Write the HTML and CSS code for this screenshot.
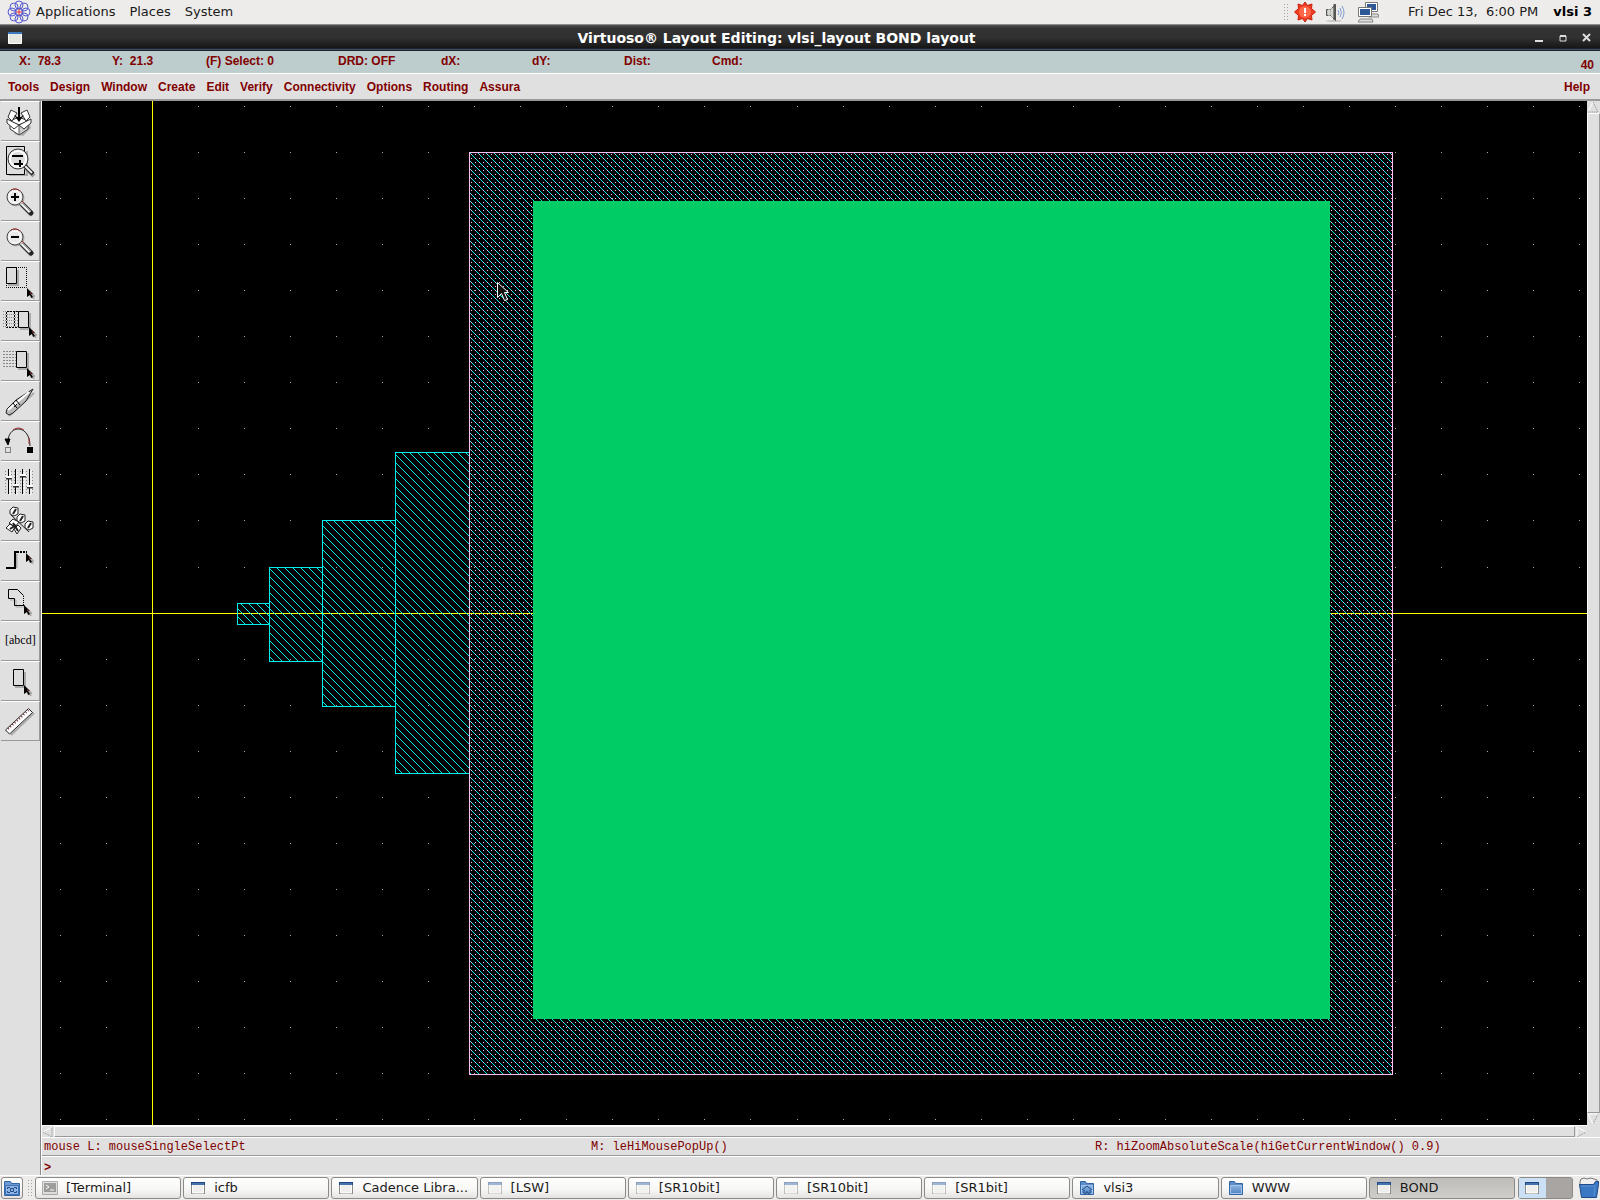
FILE: index.html
```html
<!DOCTYPE html>
<html lang="en">
<head>
<meta charset="utf-8">
<title>Virtuoso® Layout Editing: vlsi_layout BOND layout</title>
<link rel="stylesheet" href="styles.css">
</head>
<body>
<svg class="defs" aria-hidden="true">
  <defs>
    <linearGradient id="task-blue" x1="0" y1="0" x2="0" y2="1"><stop offset="0" stop-color="#8db4e2"/><stop offset="1" stop-color="#5185c4"/></linearGradient>
    <symbol id="arrow" viewBox="0 0 8 11"><path d="M2 3l5 5-2 0 2 3" fill="none" stroke="#aaa" stroke-width="2"/><path d="M0 0l6 6H4l2 3-2 1-1-3-3 2z" fill="#000"/><path d="M3 5h1v1" stroke="#a33" fill="none"/></symbol>
    <symbol id="lens" viewBox="0 0 38 38"><path d="M21 23l10 10" stroke="#aaa" stroke-width="5"/><path d="M20 21l10 10" stroke="#222" stroke-width="5" stroke-linecap="round"/><path d="M19 20l10 10" stroke="#f4f4f4" stroke-width="3"/><path d="M21 21l9 9" stroke="#999"/><circle cx="15" cy="16" r="8" fill="none" stroke="#aaa"/><circle cx="14" cy="15" r="8" fill="#e8e8e8" stroke="#444"/><circle cx="14" cy="15" r="6" fill="none" stroke="#fff"/><path d="M10 8a8 8 0 0 1 9 1M21 19l2 2" fill="none" stroke="#a33"/></symbol>
    <symbol id="window" viewBox="0 0 16 16"><rect x="1.500" y="2.500" width="13" height="11" fill="#eeeeec" stroke="#8a8c88"/><path d="M1 2h14v3H1z" fill="#204a87"/><path d="M2 4h12" stroke="#6d9bd1"/><path d="M2.500 5v8h11V5" fill="none" stroke="#fff"/></symbol>
    <symbol id="folder" viewBox="0 0 16 16"><path d="M1.500 1.500h5l1 2h7v11h-13z" fill="#5c8dc9" stroke="#3465a4"/><path d="M2.500 5.500h11v8h-11z" fill="url(#task-blue)" stroke="#a4c3e8"/></symbol>
  </defs>
</svg>
<div class="desktop">
  <header class="panel">
    <nav class="panel-menu">
      <svg class="logo" viewBox="0 0 24 24" aria-hidden="true"><g fill="none" stroke="#5459cf"><circle cx="12" cy="5" r="4"/><circle cx="17" cy="7" r="4"/><circle cx="19" cy="12" r="4"/><circle cx="17" cy="17" r="4"/><circle cx="12" cy="19" r="4"/><circle cx="7" cy="17" r="4"/><circle cx="5" cy="12" r="4"/><circle cx="7" cy="7" r="4"/><circle cx="12" cy="12" r="4"/></g><path d="M9 12h6M12 9v6" stroke="#d33"/></svg>
      <button>Applications</button><button>Places</button><button>System</button>
    </nav>
    <div class="tray">
      <span class="grip"></span>
      <svg class="tray-icon" viewBox="0 0 22 22" aria-hidden="true"><path d="M11 1l2.500 3.500 4.500-1.500-.5 4.500 4 3.500-4 3.500.5 4.500-4.500-1.500L11 21l-2.500-3.500L4 19l.5-4.500-4-3.500 4-3.500L4 3l4.500 1.500z" fill="#ee3b20" stroke="#c8210c"/><circle cx="11" cy="11" r="6" fill="#ff6848"/><path d="M11 7v5M11 13v2" stroke="#fff" stroke-width="2"/></svg>
      <svg class="tray-icon speaker" viewBox="0 0 22 22" aria-hidden="true"><ellipse cx="10" cy="20" rx="8" ry="1" fill="#c8c8c4"/><path d="M2.500 8.500h4l5-5v16l-5-5h-4z" fill="#babdb6" stroke="#555753"/><path d="M5 8v7M8 7v10" stroke="#eee"/><path d="M10.500 3v16" stroke="#555753" stroke-width="2"/><path d="M14 9q2 3 0 5M16 7q3 5 0 9M18 5q4 7 0 13" fill="none" stroke="#7c9ccb"/></svg>
      <svg class="tray-icon network" viewBox="0 0 22 22" aria-hidden="true"><path d="M8.500 1.500h12v9h-12z" fill="#fff" stroke="#777"/><path d="M10 3h9v6h-9z" fill="#2d5796"/><path d="M11 13h10l1 3H12z" fill="#ddd" stroke="#888"/><path d="M1.500 6.500h13v9h-13z" fill="#fff" stroke="#777"/><path d="M3 8h10v6H3z" fill="#2d5796"/><path d="M3 18h12l1 3H1z" fill="#ddd" stroke="#888"/></svg>
      <button class="clock">Fri Dec 13,&nbsp; 6:00 PM</button>
      <button class="user">vlsi 3</button>
    </div>
  </header>

  <div class="titlebar">
    <svg class="title-icon" viewBox="0 0 16 16" aria-hidden="true"><path d="M1.500 2.500h13v11h-13z" fill="#e4e6e0" stroke="#fff"/><path d="M1 2h14v2H1z" fill="#3b78bd"/></svg>
    <h1>Virtuoso® Layout Editing: vlsi_layout BOND layout</h1>
    <div class="controls">
      <button aria-label="Minimize"><svg viewBox="0 0 10 10"><path d="M1 8h8" stroke="#ddd" stroke-width="2"/></svg></button>
      <button aria-label="Maximize"><svg viewBox="0 0 10 10"><path d="M2 3h6v5H2z" fill="none" stroke="#ddd" stroke-width="1"/><path d="M2 3h6" stroke="#ddd" stroke-width="2"/></svg></button>
      <button aria-label="Close"><svg viewBox="0 0 10 10"><path d="M1 1l7 7M8 1L1 8" stroke="#ddd" stroke-width="2"/></svg></button>
    </div>
  </div>

  <div class="status">
    <span>X:&nbsp; 78.3</span><span>Y:&nbsp; 21.3</span><span>(F) Select: 0</span><span>DRD: OFF</span><span>dX:</span><span>dY:</span><span>Dist:</span><span>Cmd:</span><span class="count">40</span>
  </div>

  <nav class="menubar">
    <button>Tools</button><button>Design</button><button>Window</button><button>Create</button><button>Edit</button><button>Verify</button><button>Connectivity</button><button>Options</button><button>Routing</button><button>Assura</button><button class="help">Help</button>
  </nav>

  <main class="editor">
    <aside class="tools">
      <button aria-label="Save"><svg viewBox="0 0 38 38"><path d="M13 32l9 2 8-8-3-9" fill="#aaa"/><path d="M9 19l9-4 9 4v8l-9 6-9-6z" fill="#fff" stroke="#333"/><path d="M18 22v10l8-5v-8z" fill="#ccc"/><path d="M9 19l9 4 9-4M18 23v10" fill="none" stroke="#555"/><path d="M10 8l6 3-5 8-4-4zM26 8l-6 3 5 8 4-4zM6 17l4 2 8 4-5 4-7-6zM30 17l-12 6 5 4 7-6z" fill="#fff" stroke="#333"/><path d="M18 5v13" stroke="#000" stroke-width="2"/><path d="M13 13l5 7 5-7-5 3z"/></svg></button>
      <button aria-label="Fit"><svg viewBox="0 0 38 38"><path d="M8 33h18V9" fill="none" stroke="#aaa" stroke-width="2"/><path d="M5.500 4.500h18v28h-18z" fill="#ddd" stroke="#000"/><path d="M24 25l9 9" stroke="#999" stroke-width="4"/><path d="M23 23l9 9" stroke="#222" stroke-width="4"/><path d="M23 23l8 8" stroke="#eee" stroke-width="2"/><circle cx="17" cy="17" r="10" fill="#ddd" stroke="#333"/><circle cx="17" cy="17" r="8" fill="none" stroke="#fff" stroke-width="2"/><path d="M11 14h11M13 22h9M19 18v7" stroke="#000" stroke-width="2"/></svg></button>
      <button aria-label="Zoom in"><svg viewBox="0 0 38 38"><use href="#lens"/><path d="M10 15h8M14 11v8" stroke="#000" stroke-width="2"/></svg></button>
      <button aria-label="Zoom out"><svg viewBox="0 0 38 38"><use href="#lens"/><path d="M10 15h8" stroke="#000" stroke-width="2"/></svg></button>
      <button aria-label="Stretch"><svg viewBox="0 0 38 38"><path d="M7 23h10V8" fill="none" stroke="#aaa" stroke-width="2"/><path d="M5.500 5.500h10v16h-10z" fill="#ddd" stroke="#000"/><path d="M15 5.500h10.500v20H5.500v-4" fill="none" stroke="#000" stroke-dasharray="1 1"/><use href="#arrow" x="26" y="26" width="8" height="11"/></svg></button>
      <button aria-label="Copy"><svg viewBox="0 0 38 38"><path d="M2 9.500h15M2 12.500h15M2 15.500h15M2 18.500h15M2 21.500h15M2 24.500h15" stroke="#888" stroke-dasharray="1 1"/><path d="M17 9.500H5.500v16H17M13.500 10v15" fill="none" stroke="#000" stroke-dasharray="2 1"/><path d="M29 11v16H19" fill="none" stroke="#aaa" stroke-width="2"/><path d="M17.500 9.500h10v16h-10z" fill="#ddd" stroke="#000"/><use href="#arrow" x="28" y="25" width="8" height="11"/></svg></button>
      <button aria-label="Move"><svg viewBox="0 0 38 38"><path d="M2 9.500h14M2 12.500h14M2 15.500h14M2 18.500h14M2 21.500h14M2 24.500h14" stroke="#888" stroke-dasharray="2 1"/><path d="M27 11v16H17" fill="none" stroke="#aaa" stroke-width="2"/><path d="M15.500 9.500h10v16h-10z" fill="#ddd" stroke="#000"/><use href="#arrow" x="26" y="26" width="8" height="11"/></svg></button>
      <button aria-label="Delete"><svg viewBox="0 0 38 38"><path d="M8 34L33 11" stroke="#aaa" stroke-width="2"/><path d="M32 7L15 18l-9 9-1 4 3 2 4-2 13-12z" fill="#bbb" stroke="#222"/><path d="M28 10L7 28" stroke="#fff" stroke-width="2"/><path d="M12 21l4 5M15 18l4 5M13 25l3-3" stroke="#000"/></svg></button>
      <button aria-label="Undo"><svg viewBox="0 0 38 38"><path d="M7 20C7 2 29 2 29 24" fill="none" stroke="#222"/><path d="M12 8q5-4 11 0M28 16v6" fill="none" stroke="#a33"/><path d="M4 17h5l-2 6z" stroke="#000"/><path d="M4.500 25.500h5v5h-5z" fill="none" stroke="#222" stroke-dasharray="1 1"/><path d="M26 25h6v6h-6z"/></svg></button>
      <button aria-label="Properties"><svg viewBox="0 0 38 38"><path d="M4 9.500h28M4 12.500h28M4 15.500h28M4 18.500h28M4 21.500h28M4 24.500h28M4 27.500h28M4 30.500h28" stroke="#888" stroke-dasharray="1 2"/><path d="M9 8v25M16 8v25M23 8v25M30 8v25" stroke="#fff"/><path d="M7.500 7v25M14.500 7v25M21.500 7v25M28.500 7v25" stroke="#000"/><path d="M5 16h6M12 24h6M19 14h6M26 25h6" stroke="#333" stroke-width="3"/><path d="M5 15h6M12 23h6M19 13h6M26 24h6" stroke="#fff" stroke-width="2"/></svg></button>
      <button aria-label="Instance"><svg viewBox="0 0 38 38"><path d="M10 13l18 17M10 22l14-6" stroke="#222"/><g fill="#fff" stroke="#222"><path d="M9 8l3-3 5 1v6l-4 2-4-2z"/><path d="M16 15l3-3 5 1v6l-4 2-4-2z"/><path d="M24 22l3-3 5 1v6l-4 2-4-2z"/><path d="M8 21l4-4 6 3-4 5zM5 26l4-4 5 3-3 5zM13 27l4-4 3 3-4 6z"/></g><path d="M15 7l-3 5M22 14l-3 5M30 21l-3 5M9 27l6-4M12 21l5 8" stroke="#222" stroke-width="2"/></svg></button>
      <button aria-label="Path"><svg viewBox="0 0 38 38"><path d="M15.500 26V12" stroke="#aaa" stroke-width="2"/><path d="M5 26h9V10h4" fill="none" stroke="#000" stroke-width="2"/><path d="M19 10h7" stroke="#000" stroke-width="2" stroke-dasharray="2 1"/><use href="#arrow" x="25" y="11" width="8" height="11"/></svg></button>
      <button aria-label="Polygon"><svg viewBox="0 0 38 38"><path d="M9 18h6v7h8" fill="none" stroke="#aaa"/><path d="M23.500 23.500h-10v-7h-6v-9h9l6 6" fill="none" stroke="#000"/><path d="M22.500 14v10" fill="none" stroke="#000" stroke-dasharray="1 1"/><use href="#arrow" x="23" y="23" width="8" height="11"/></svg></button>
      <button class="label-tool" aria-label="Label">[abcd]</button>
      <button aria-label="Rectangle"><svg viewBox="0 0 38 38"><path d="M24 10v15H14" fill="none" stroke="#aaa" stroke-width="2"/><path d="M12.500 7.500h10v16h-10z" fill="#ddd" stroke="#000"/><use href="#arrow" x="23" y="23" width="8" height="11"/></svg></button>
      <button aria-label="Ruler"><svg viewBox="0 0 38 38"><path d="M10 33L33 11" stroke="#aaa" stroke-width="2"/><path d="M27.500 6.500l4 4L8.500 32l-4-4z" fill="#fff" stroke="#222"/><path d="M7 27l22-20" stroke="#733" stroke-width="2" stroke-dasharray="1 2"/></svg></button>
    </aside>

    <section class="work">
      <div class="view">
        <svg class="canvas" role="img" aria-label="BOND layout" shape-rendering="crispEdges">
          <defs>
            <pattern id="hatch" width="8" height="8" patternUnits="userSpaceOnUse">
              <path d="M5 0h1v1h-1zM6 1h1v1h-1zM7 2h1v1h-1zM0 3h1v1h-1zM1 4h1v1h-1zM2 5h1v1h-1zM3 6h1v1h-1zM4 7h1v1h-1z" fill="#0ee"/>
            </pattern>
            <pattern id="dots" width="4" height="4" patternUnits="userSpaceOnUse">
              <path d="M3 2h1v1h-1z" fill="#ffbff2"/>
            </pattern>
          </defs>
          <g id="grid" fill="#aaa"></g>
          <rect x="0" y="512" width="100%" height="1" fill="#ff0"/>
          <rect x="110" y="0" width="1" height="100%" fill="#ff0"/>
          <g transform="translate(-42 -101)">
            <g fill="url(#hatch)">
              <rect x="237" y="603" width="33" height="22"/>
              <rect x="269" y="567" width="54" height="95"/>
              <rect x="322" y="520" width="74" height="187"/>
              <rect x="395" y="452" width="75" height="322"/>
              <rect x="469" y="152" width="924" height="923"/>
            </g>
            <rect x="469" y="152" width="924" height="923" fill="url(#dots)"/>
            <g fill="none" stroke="#0ee">
              <rect x="237.500" y="603.500" width="32" height="21"/>
              <rect x="269.500" y="567.500" width="53" height="94"/>
              <rect x="322.500" y="520.500" width="73" height="186"/>
              <rect x="395.500" y="452.500" width="74" height="321"/>
            </g>
            <rect x="469.500" y="152.500" width="923" height="922" fill="none" stroke="#ffbff2"/>
            <rect x="533" y="201" width="797" height="818" fill="#0c6"/>
            <path d="M497.500 282.500v15l4-4 3 7 3-1-3-7h4z" fill="#111" stroke="#fff" shape-rendering="auto"/>
          </g>
        </svg>
        <div class="vscroll"><svg viewBox="0 0 12 12"><path d="M1 11L6 1" stroke="#fff"/><path d="M6 1l5 10H1" fill="none" stroke="#888" stroke-dasharray="1 1"/></svg><span class="thumb"></span><svg viewBox="0 0 12 12"><path d="M11 1L6 11" stroke="#888" stroke-dasharray="1 1"/><path d="M11 1H1l5 10" fill="none" stroke="#fff"/></svg></div>
      </div>
      <div class="hscroll"><svg viewBox="0 0 12 12"><path d="M10 1L1 6" stroke="#fff"/><path d="M1 6l9 5V1" fill="none" stroke="#888" stroke-dasharray="1 1"/></svg><span class="thumb"></span><svg viewBox="0 0 12 12"><path d="M2 11V1l9 5" fill="none" stroke="#fff"/><path d="M2 11l9-5" stroke="#888" stroke-dasharray="1 1"/></svg></div>
      <div class="bindings"><span>mouse L: mouseSingleSelectPt</span><span>M: leHiMousePopUp()</span><span>R: hiZoomAbsoluteScale(hiGetCurrentWindow() 0.9)</span></div>
      <div class="prompt"><label for="cmd">&gt;</label><input id="cmd" type="text"></div>
    </section>
  </main>

  <footer class="taskbar">
    <button class="home" aria-label="Show desktop"><svg viewBox="0 0 18 18"><path d="M1.500 2.500h6l1 2h8v12h-15z" fill="#6d9bd3" stroke="#3465a4"/><path d="M2.500 6.500h13v9h-13z" fill="#8fb6e4" stroke="#3f72b4"/><path d="M4.500 10V8.500H7M11 8.500h2.500V10M4.500 12v1.500H7M11 13.500h2.500V12" fill="none" stroke="#204a87"/><path d="M7.500 9.500h3v3h-3z" fill="none" stroke="#204a87"/></svg></button>
    <span class="grip"></span>
    <div class="tasks">
      <button><svg class="dim" viewBox="0 0 16 16"><path d="M.5 1.500h15v13H.5z" fill="#ccc" stroke="#666"/><path d="M2 3h12v9H2z" fill="#444"/><path d="M4 5l3 2-3 2M8 10h4" fill="none" stroke="#fff"/></svg><span>[Terminal]</span></button>
      <button><svg><use href="#window"/></svg><span>icfb</span></button>
      <button><svg><use href="#window"/></svg><span>Cadence Libra...</span></button>
      <button><svg class="dim"><use href="#window"/></svg><span>[LSW]</span></button>
      <button><svg class="dim"><use href="#window"/></svg><span>[SR10bit]</span></button>
      <button><svg class="dim"><use href="#window"/></svg><span>[SR10bit]</span></button>
      <button><svg class="dim"><use href="#window"/></svg><span>[SR1bit]</span></button>
      <button><svg viewBox="0 0 16 16"><use href="#folder"/><path d="M3 10l5-4 5 4M5 10v4h2v-2h2v2h2v-4" fill="none" stroke="#204a87"/></svg><span>vlsi3</span></button>
      <button><svg><use href="#folder"/></svg><span>WWW</span></button>
      <button class="active"><svg><use href="#window"/></svg><span>BOND</span></button>
    </div>
    <div class="pager"><button class="current" aria-label="Workspace 1"><svg><use href="#window"/></svg></button><button aria-label="Workspace 2"></button></div>
    <button class="trash" aria-label="Trash"><svg viewBox="0 0 22 22"><path d="M2 5l1-3 3-1 3 1 4-1 3 1 3 1 1 5H2z" fill="#eee" stroke="#777"/><path d="M1.500 7.500h14l2-3h3v3l-2 13H3.500z" fill="#3a78c3" stroke="#204a87"/><path d="M3 9h14l-1 10" fill="none" stroke="#5d90cf"/></svg></button>
  </footer>
</div>
<script src="grid.js"></script>
</body>
</html>
```
FILE: styles.css
```css
* { box-sizing: border-box; }
body { margin: 0; background: #e0e0e0; }
button { margin: 0; padding: 0; border: 0; background: none; color: inherit; font: inherit; white-space: nowrap; }
svg { display: block; flex: none; }
.defs { position: absolute; width: 0; height: 0; }

.desktop { display: flex; flex-direction: column; min-height: 100vh; font: 13px/16px "DejaVu Sans", sans-serif; color: #1a1a1a; }

.panel { display: flex; justify-content: space-between; height: 25px; padding: 0 8px 0 7px; background: #edeceb; border-bottom: 1px solid #8f8d89; }
.panel-menu, .tray { display: flex; align-items: center; }
.panel-menu { gap: 14px; }
.logo { width: 24px; height: 24px; margin-right: -9px; }
.tray-icon { width: 22px; height: 22px; margin-left: 6px; }
.speaker { margin-left: 8px; }
.network { margin-left: 11px; }
.clock { margin-left: 29px; }
.user { margin-left: 15px; color: #000; font-weight: bold; }
.grip { width: 5px; height: 18px; background: radial-gradient(circle, #aaa 1px, transparent 1px) 0 0 / 3px 3px; }

.titlebar { display: grid; grid-template-columns: 41px 1fr 80px; align-items: center; height: 26px; padding-right: 8px; background: linear-gradient(#555 0, #333 3px, #303030 50%, #151515 90%, #4a5d80 92%, #111 100%); color: #fff; }
.titlebar h1 { margin: 0; font-size: 14px; text-align: center; }
.title-icon { width: 16px; height: 16px; margin-left: 7px; }
.controls { display: flex; justify-content: flex-end; gap: 14px; }
.controls svg { width: 10px; height: 10px; }

.status, .menubar { font: bold 12px/16px "Liberation Sans", sans-serif; color: #800000; }
.status { display: grid; grid-template-columns: 93px 94px 132px 103px 91px 92px 88px 1fr auto; height: 22px; padding: 2px 6px 0 19px; background: #bdcccc; }
.count { padding-top: 4px; }
.menubar { display: flex; align-items: center; gap: 11px; height: 28px; padding: 0 10px 0 8px; background: #e0e0e0; border-top: 1px solid #fff; border-bottom: 2px solid #999; }
.help { margin-left: auto; }

.editor { display: flex; flex: 1; background: #e0e0e0; }
.tools { display: flex; flex-direction: column; flex: none; width: 42px; padding-left: 1px; border-right: 1px solid #fff; box-shadow: inset -1px 0 #888; }
.tools button { display: flex; align-items: center; justify-content: flex-start; width: 39px; height: 40px; border: solid; border-width: 1px 1px 1px 0; border-color: #fff #999 #999; }
.tools svg { width: 38px; height: 38px; }
.tools .label-tool { padding: 0 0 3px 4px; font: 12px/16px "Liberation Serif", serif; color: #000; }

.work { display: flex; flex: 1; flex-direction: column; min-width: 0; }
.view { display: flex; flex: 1; }
.canvas { flex: 1; align-self: stretch; min-width: 0; width: 0; height: auto; background: #000; }
.vscroll { display: flex; flex-direction: column; width: 13px; }
.hscroll { display: flex; height: 12px; margin-right: 13px; border-top: 1px solid #fff; }
.vscroll svg, .hscroll svg { width: 12px; height: 12px; }
.thumb { flex: 1; border: 1px solid; border-color: #fff #999 #999 #fff; }
.bindings { display: grid; grid-template-columns: 547px 504px 1fr; height: 19px; padding-left: 2px; border-top: 1px solid #fff; border-bottom: 1px solid #999; font: 12px/18px "Liberation Mono", monospace; color: #800000; white-space: nowrap; }
.prompt { display: flex; height: 19px; padding-left: 2px; border-top: 1px solid #fff; font: bold 12px/22px "Liberation Mono", monospace; color: #800000; }
.prompt input { flex: 1; padding: 0 4px; border: 0; outline: 0; background: none; color: inherit; font: inherit; }

.taskbar { display: flex; align-items: center; height: 25px; padding: 0 0 0 1px; background: #edeceb; border-top: 1px solid #fff; }
.home, .tasks button { border: 1px solid #8c8a87; border-radius: 3px; background: linear-gradient(#fff, #f6f6f5 60%, #e4e3e1); }
.home { width: 22px; height: 22px; padding: 1px; }
.home svg { width: 18px; height: 18px; }
.taskbar .grip { margin: 0 3px 0 4px; }
.tasks { display: flex; flex: 1; gap: 2px; min-width: 0; }
.tasks button { display: flex; flex: 1 1 0; align-items: center; gap: 8px; min-width: 0; height: 22px; padding-left: 6px; }
.tasks svg { width: 16px; height: 16px; }
.tasks .active { background: linear-gradient(#bfbdba, #d0cecb); }
.dim { opacity: .5; }
.pager { display: flex; width: 55px; height: 22px; margin: 0 5px 0 3px; border: 1px solid #8c8a87; border-radius: 3px; background: #a8a5a2; }
.pager button { width: 50%; }
.pager .current { display: flex; align-items: center; justify-content: center; background: #cbdff5; }
.pager svg { width: 16px; height: 16px; }
.trash svg { width: 22px; height: 22px; }
```
FILE: grid.js
```js
// Fill the layout canvas with snap-grid dots.
const grid = document.getElementById('grid');
const box = grid.ownerSVGElement.getBoundingClientRect();
const pitch = 46.045;
for (let y = 5.55; y < box.height; y += pitch) {
  for (let x = 18.3; x < box.width; x += pitch) {
    const dot = document.createElementNS('http://www.w3.org/2000/svg', 'rect');
    dot.setAttribute('x', Math.floor(x));
    dot.setAttribute('y', Math.floor(y));
    dot.setAttribute('width', 1);
    dot.setAttribute('height', 1);
    grid.appendChild(dot);
  }
}
```
